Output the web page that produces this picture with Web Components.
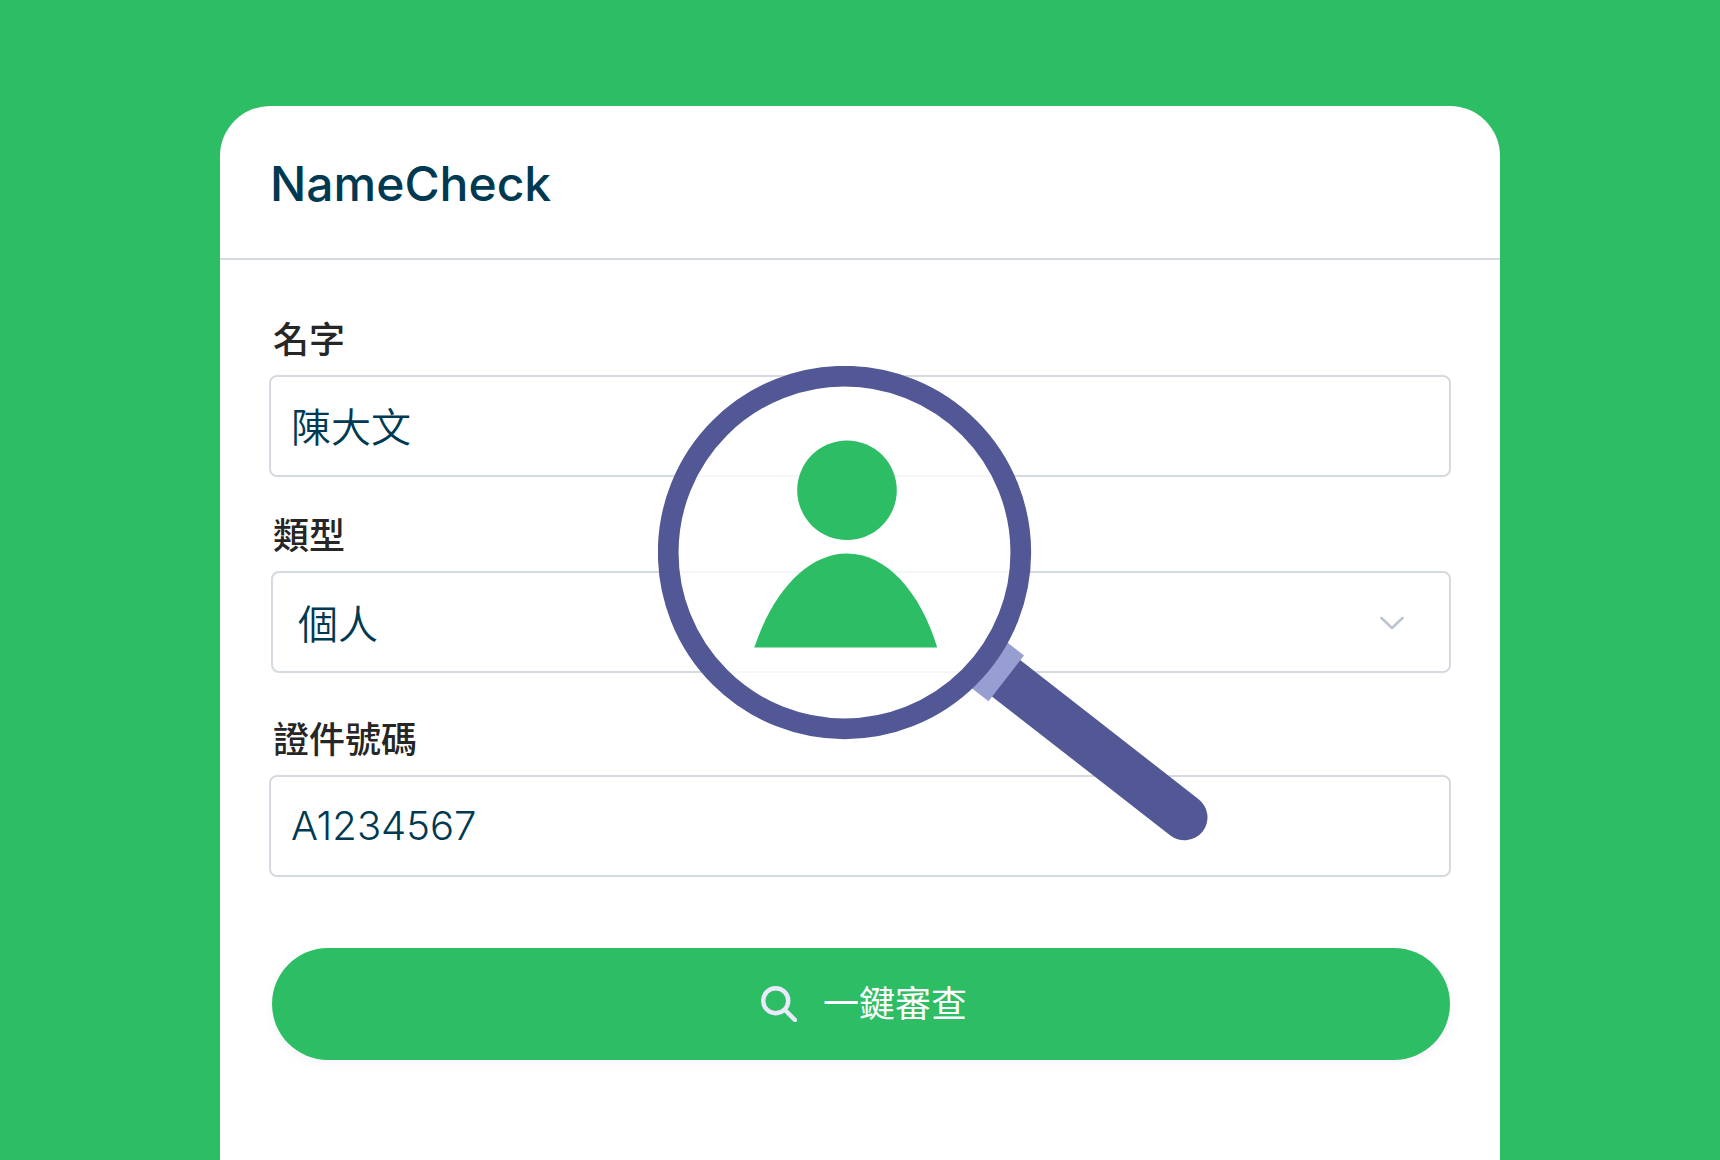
<!DOCTYPE html>
<html lang="zh-Hant">
<head>
  <meta charset="utf-8">
  <meta name="viewport" content="width=device-width, initial-scale=1">
  <title>NameCheck</title>
  <style>
    :root {
      --green: #2dbd64;
      --ink: #003a52;
      --label: #262626;
      --line: #d5d9e0;
      --indigo: #515895;
      --lavender: #979fd2;
    }

    body {
      margin: 0;
      background: var(--green);
      color: var(--ink);
      font-family: Inter, "Noto Sans CJK TC", sans-serif;
    }
  </style>
</head>
<body>
  <check-page>
    <check-card>
      <span slot="title">NameCheck</span>
      <check-form>
        <text-field label="名字" name="name" value="陳大文"></text-field>
        <select-field label="類型" name="type" options="個人"></select-field>
        <text-field label="證件號碼" name="id-number" value="A1234567"></text-field>
        <search-button>一鍵審查</search-button>
        <magnifier-art slot="art"></magnifier-art>
      </check-form>
    </check-card>
  </check-page>

  <script>
    const fieldStyle = `
      * {
        box-sizing: border-box;
      }

      :host {
        display: flex;
        flex-direction: column;
        gap: 11px;
      }

      label {
        padding-left: 4px;
        color: var(--label);
        font-size: 36px;
        font-weight: 500;
        line-height: 48px;
      }

      input, select {
        width: 100%;
        height: 102px;
        margin: 0;
        padding: 0 20px 2px;
        border: 2px solid var(--line);
        border-radius: 8px;
        background: white;
        color: var(--ink);
        font: inherit;
        font-size: 40px;
        font-weight: 350;
      }
    `;

    class CheckPage extends HTMLElement {
      constructor() {
        super();
        this.attachShadow({ mode: "open" });
        this.shadowRoot.innerHTML = `
          <style>
            :host {
              box-sizing: border-box;
              display: flex;
              justify-content: center;
              min-height: 100vh;
              padding: 106px 24px 0;
            }

            main {
              display: flex;
              flex: 0 1 1280px;
              min-width: 0;
            }
          </style>
          <main><slot></slot></main>
        `;
      }
    }

    class CheckCard extends HTMLElement {
      constructor() {
        super();
        this.attachShadow({ mode: "open" });
        this.shadowRoot.innerHTML = `
          <style>
            :host {
              display: block;
              flex: 1;
              min-width: 0;
              border-radius: 50px 50px 0 0;
              background: white;
            }

            header {
              padding: 48px 50px 44px;
              border-bottom: 2px solid var(--line);
            }

            h1 {
              margin: 0;
              font-size: 48px;
              font-weight: 500;
              line-height: 60px;
            }
          </style>
          <header>
            <h1><slot name="title"></slot></h1>
          </header>
          <slot></slot>
        `;
      }
    }

    class CheckForm extends HTMLElement {
      constructor() {
        super();
        this.attachShadow({ mode: "open" });
        this.shadowRoot.innerHTML = `
          <style>
            :host {
              display: block;
              position: relative;
            }

            form {
              display: flex;
              flex-direction: column;
              gap: 35px;
              padding: 56px 49px;
            }

            /* the drawing floats over the fields and lets clicks through */
            .art {
              position: absolute;
              top: 106px;
              left: calc(50% - 202px);
              pointer-events: none;
            }
          </style>
          <form onsubmit="return false">
            <slot></slot>
          </form>
          <div class="art"><slot name="art"></slot></div>
        `;
      }
    }

    class TextField extends HTMLElement {
      constructor() {
        super();
        this.attachShadow({ mode: "open" });
        this.shadowRoot.innerHTML = `
          <style>${fieldStyle}</style>
          <label for="control">${this.getAttribute("label")}</label>
          <input id="control" type="text" name="${this.getAttribute("name")}" value="${this.getAttribute("value")}">
        `;
      }
    }

    class SelectField extends HTMLElement {
      constructor() {
        super();
        this.attachShadow({ mode: "open" });
        const options = this.getAttribute("options").split(",");
        this.shadowRoot.innerHTML = `
          <style>
            ${fieldStyle}

            :host {
              margin-bottom: 8px;
            }

            .box {
              display: grid;
              align-items: center;
              padding-left: 2px;
            }

            .box > * {
              grid-area: 1 / 1;
            }

            select {
              appearance: none;
              padding: 4px 25px 0;
            }

            svg {
              justify-self: end;
              margin-right: 46px;
              pointer-events: none;
            }
          </style>
          <label for="control">${this.getAttribute("label")}</label>
          <div class="box">
            <select id="control" name="${this.getAttribute("name")}">
              ${options.map((text) => `<option>${text}</option>`).join("")}
            </select>
            <svg width="26" height="16" viewBox="0 0 26 16" fill="none" stroke="#bcc4d1" stroke-width="2.6" stroke-linecap="round" stroke-linejoin="round" aria-hidden="true">
              <path d="M2.5 4 13 14 23.5 4"/>
            </svg>
          </div>
        `;
      }
    }

    class SearchButton extends HTMLElement {
      constructor() {
        super();
        this.attachShadow({ mode: "open" });
        this.shadowRoot.innerHTML = `
          <style>
            :host {
              display: block;
              margin: 36px 1px 0 3px;
            }

            button {
              display: flex;
              align-items: center;
              justify-content: center;
              gap: 26px;
              width: 100%;
              height: 112px;
              padding: 0 24px;
              border: none;
              border-radius: 56px;
              background: var(--green);
              box-shadow: 0 4px 8px rgba(80, 70, 180, 0.05);
              color: white;
              font: inherit;
              font-size: 36px;
              cursor: pointer;
            }

            span {
              padding-bottom: 6px;
            }
          </style>
          <button type="submit">
            <svg width="42" height="36" viewBox="-6 0 42 36" fill="none" stroke="#ebe8fc" stroke-width="4.4" stroke-linecap="round" aria-hidden="true">
              <circle cx="14.7" cy="14.7" r="12.5"/>
              <path d="M24 24 34 34"/>
            </svg>
            <span><slot></slot></span>
          </button>
        `;
      }
    }

    class MagnifierArt extends HTMLElement {
      constructor() {
        super();
        this.attachShadow({ mode: "open" });
        this.shadowRoot.innerHTML = `
          <style>
            :host, svg {
              display: block;
            }
          </style>
          <svg width="550" height="476" viewBox="658 366 550 476" aria-hidden="true">
            <!-- handle and collar sit under the rim -->
            <path d="M1007 679 1184.5 817.3" stroke="var(--indigo)" stroke-width="46" stroke-linecap="round"/>
            <path d="M1024 655.5 988.5 701.3 960 679 995.5 633.3Z" fill="var(--lavender)"/>
            <circle cx="844.5" cy="552.5" r="176.3" fill="white" fill-opacity="0.75"/>
            <circle cx="844.5" cy="552.5" r="176.3" fill="none" stroke="var(--indigo)" stroke-width="20.7"/>
            <circle cx="847" cy="490.2" r="49.8" fill="var(--green)"/>
            <path d="M754.3 647.6C773 591 808 553.6 847 553.6S920 591 937.2 647.6Z" fill="var(--green)"/>
          </svg>
        `;
      }
    }

    customElements.define("check-page", CheckPage);
    customElements.define("check-card", CheckCard);
    customElements.define("check-form", CheckForm);
    customElements.define("text-field", TextField);
    customElements.define("select-field", SelectField);
    customElements.define("search-button", SearchButton);
    customElements.define("magnifier-art", MagnifierArt);
  </script>
</body>
</html>
